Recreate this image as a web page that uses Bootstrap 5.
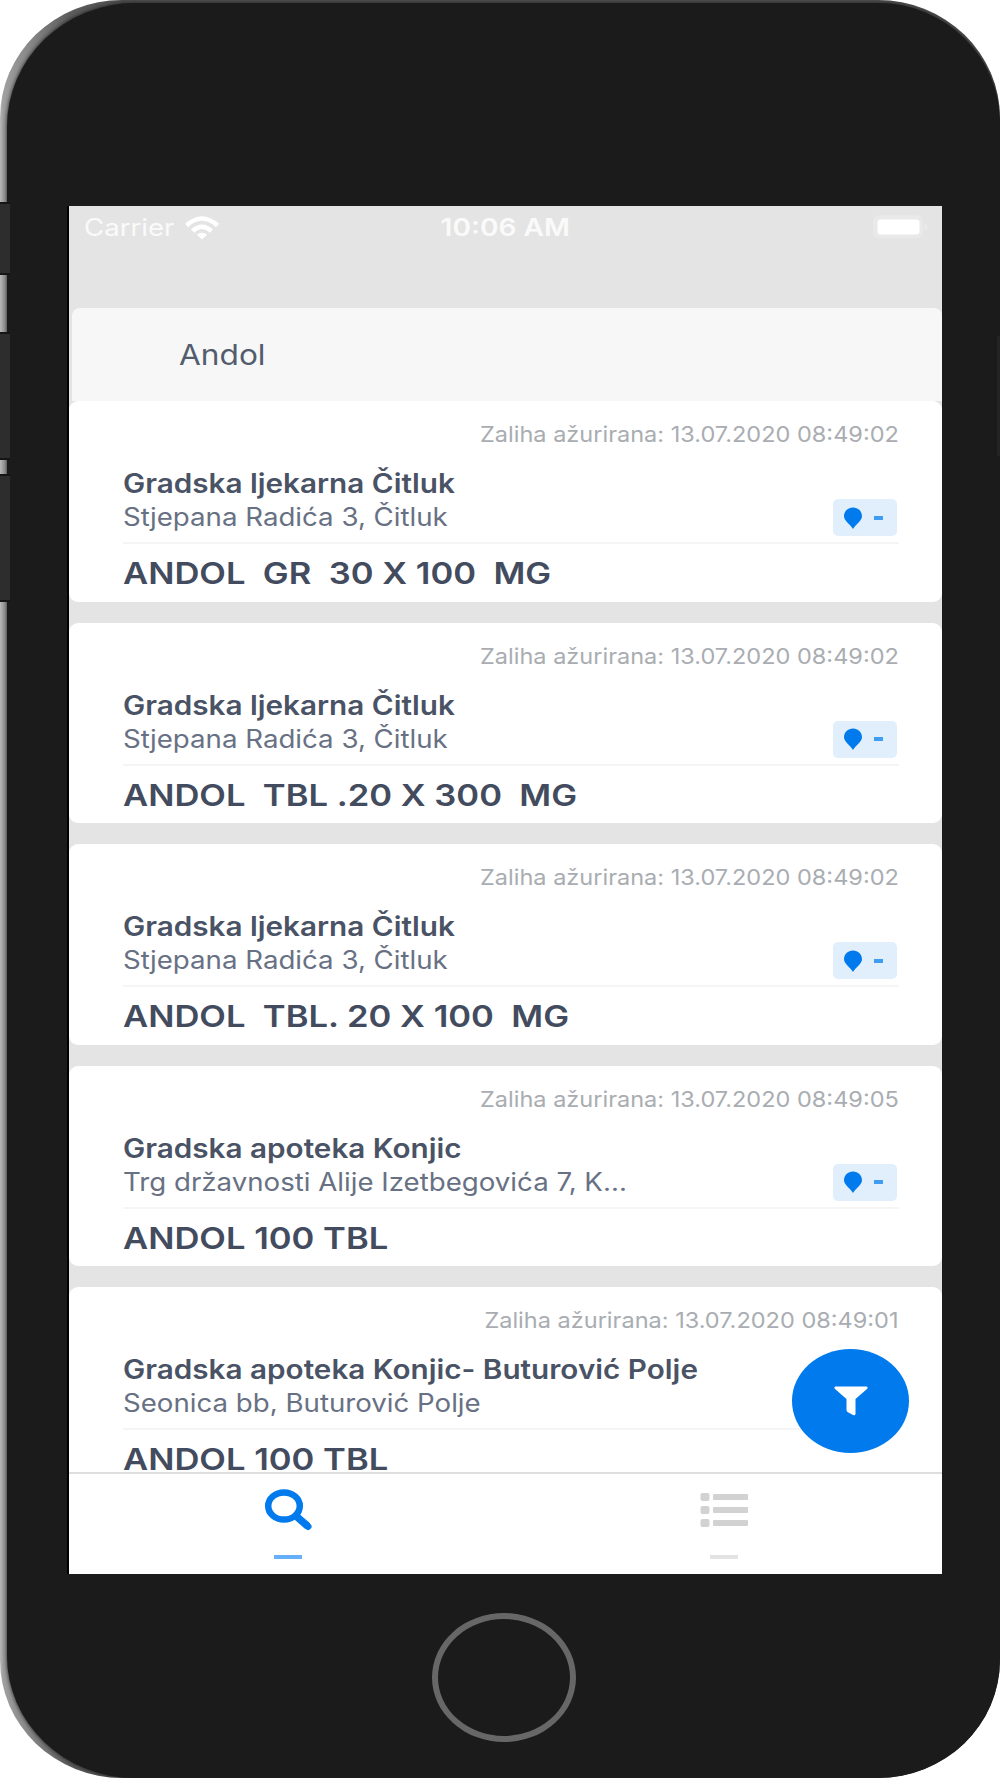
<!DOCTYPE html>
<html lang="bs">

<head>
    <meta charset="UTF-8">
    <meta name="viewport" content="width=device-width, initial-scale=1.0">
    <title>Andol</title>
    <link rel="stylesheet" href="https://cdn.jsdelivr.net/npm/bootstrap@5.3.2/dist/css/bootstrap.min.css">
    <style>
        body {
            background-color: #fff;
            font-family: Inter, "Liberation Sans", sans-serif;
            color: #434c5e;
        }

        /* Phone frame */
        .phone {
            width: 1000px;
            height: 1778px;
            padding: 3px 0 0 7px;
            border-radius: 122px / 118px;
            background: linear-gradient(to right, #b8b8b8, #a0a0a0 3px, #8c8c8c 25px, #5c5c5c 70px, #505050 120px);
        }

        .phone-body {
            height: 1775px;
            border-radius: 128px 122px 122px 128px / 124px 120px 118px 122px;
            background-color: #1b1b1b;
            box-shadow: 0 0 4px #1b1b1b;
            padding-top: 203px;
        }

        .phone-row {
            height: 1368px;
        }

        .rail-left {
            width: 62px;
            border-right: 2px solid #000;
        }

        .side-key {
            width: 10px;
            margin-left: -7px;
            background-color: #2d2d2d;
            border-top: 2px solid #151515;
            border-bottom: 2px solid #151515;
        }

        .key-mute {
            height: 73px;
            margin-top: -4px;
        }

        .key-up {
            height: 128px;
            margin-top: 57px;
        }

        .key-down {
            height: 128px;
            margin-top: 14px;
        }

        .rail-right {
            width: 58px;
        }

        .key-power {
            width: 3px;
            height: 120px;
            margin-top: 130px;
            background-color: #232323;
        }

        .home-key {
            width: 144px;
            height: 129px;
            margin: 39px 0 0 425px;
            border: 6px solid #676767;
            border-radius: 50%;
        }

        /* App screen */
        .screen {
            width: 873px;
            background-color: #e4e4e4;
        }

        .wide {
            display: inline-block;
            white-space: pre;
            transform: scaleX(1.13);
            transform-origin: left;
        }

        .status-bar {
            height: 102px;
            padding: 1px 15px 0;
            font-size: 24px;
            line-height: 42px;
            color: #fafafa;
        }

        .status-side {
            width: 240px;
            height: 42px;
        }

        .carrier {
            width: 101px;
        }

        .status-bar .wide {
            transform: scaleX(1.15);
        }

        .status-bar .clock {
            transform: scaleX(1.17);
            transform-origin: center;
        }

        .search-bar {
            height: 93px;
            margin-left: 3px;
            padding-left: 107px;
            border-radius: 8px 8px 0 0;
            background-color: #f7f7f7;
            font-size: 28px;
            line-height: 95px;
            color: #535c6d;
        }

        .results {
            height: 1071px;
        }

        .result {
            height: 200.5px;
            margin-bottom: 21px;
            padding: 18px 43px 0 54px;
            border-radius: 9px;
            background-color: #fff;
        }

        .result-date {
            font-size: 21.5px;
            line-height: 30px;
            color: #a9adb2;
        }

        .result-date .wide {
            transform: scaleX(1.094);
            transform-origin: right;
        }

        .result-name {
            margin-top: 17px;
            font-size: 26.5px;
            line-height: 34px;
            font-weight: 600;
            color: #4a5365;
        }

        .result-name .wide {
            transform: scaleX(1.12);
        }

        .result-address {
            height: 33px;
            font-size: 25px;
            line-height: 34px;
            color: #687184;
        }

        .result-address .wide {
            transform: scaleX(1.106);
        }

        .distance {
            width: 64px;
            height: 37px;
            margin-top: -1px;
            margin-right: 2px;
            padding-left: 11px;
            border-radius: 5px;
            background-color: #e1effc;
        }

        .distance-dash {
            width: 9px;
            height: 4px;
            background-color: #3f9cf3;
        }

        .result-product {
            margin-top: 9px;
            padding-top: 11px;
            border-top: 2px solid #f5f5f6;
            font-size: 30px;
            line-height: 37px;
            font-weight: 600;
            color: #434c5e;
        }

        .result-product .wide {
            transform: scaleX(1.152);
        }

        .filter-btn {
            right: 33px;
            bottom: 121px;
            width: 117px;
            height: 104px;
            border-radius: 50%;
            background-color: #007aed;
        }

        .tab-bar {
            height: 102px;
            border-top: 2px solid #dedede;
            background-color: #fff;
        }

        .tab-icon {
            margin-top: 15px;
        }

        .tab-line {
            width: 28px;
            height: 4px;
            margin-top: 24px;
            background-color: #e3e3e3;
        }

        .tab-current {
            padding-left: 1px;
        }

        .tab-current .tab-line {
            background-color: #66affa;
        }
    </style>
</head>

<body>

    <!-- Icons -->
    <svg class="d-none">
        <symbol id="pin" viewBox="0 0 18 22">
            <path fill="#007aed" d="M9 0.5C4 0.5 0 4.200 0 9.200C0 13.500 5.500 16.500 9 22C12.500 16.500 18 13.500 18 9.200C18 4.200 14 0.500 9 0.500Z" />
        </symbol>
    </svg>

    <div class="phone overflow-hidden">
        <div class="phone-body">
            <div class="phone-row d-flex">

                <div class="rail-left flex-shrink-0">
                    <div class="side-key key-mute"></div>
                    <div class="side-key key-up"></div>
                    <div class="side-key key-down"></div>
                </div>

                <main class="screen position-relative overflow-hidden flex-shrink-0">
                    <!-- Status bar -->
                    <div class="status-bar d-flex justify-content-between">
                        <div class="status-side d-flex align-items-center">
                            <div class="carrier"><span class="wide">Carrier</span></div>
                            <svg width="34" height="24" viewBox="0 0 34 24" fill="none" stroke="#fff" stroke-width="4.500">
                                <path d="M1.500 9.500Q17 -4.500 32.500 9.500" />
                                <path d="M7.500 15Q17 6.500 26.500 15" />
                                <path d="M17 23.500L11.800 18.800Q17 14.500 22.200 18.800Z" fill="#fff" stroke="none" />
                            </svg>
                        </div>
                        <div class="fw-semibold"><span class="wide clock">10:06 AM</span></div>
                        <div class="status-side d-flex align-items-center justify-content-end">
                            <svg width="56" height="26" viewBox="0 0 56 26">
                                <rect x="2" y="0.500" width="50" height="23" rx="6" fill="#e9e9e9" />
                                <rect x="6.500" y="4.500" width="42" height="15" rx="3" fill="#fff" />
                                <rect x="53.500" y="9" width="2.500" height="6" rx="1" fill="#ebebeb" />
                            </svg>
                        </div>
                    </div>

                    <div class="search-bar"><span class="wide">Andol</span></div>

                    <!-- Results -->
                    <div class="results overflow-hidden">
                        <div class="result">
                            <div class="result-date text-end"><span class="wide">Zaliha ažurirana: 13.07.2020 08:49:02</span></div>
                            <div class="result-name"><span class="wide">Gradska ljekarna Čitluk</span></div>
                            <div class="result-address d-flex justify-content-between">
                                <span class="wide">Stjepana Radića 3, Čitluk</span>
                                <div class="distance d-flex align-items-center gap-2">
                                    <svg width="18" height="22"><use href="#pin" /></svg>
                                    <div class="distance-dash ms-1"></div>
                                </div>
                            </div>
                            <div class="result-product"><span class="wide">ANDOL  GR  30 X 100  MG</span></div>
                        </div>

                        <div class="result">
                            <div class="result-date text-end"><span class="wide">Zaliha ažurirana: 13.07.2020 08:49:02</span></div>
                            <div class="result-name"><span class="wide">Gradska ljekarna Čitluk</span></div>
                            <div class="result-address d-flex justify-content-between">
                                <span class="wide">Stjepana Radića 3, Čitluk</span>
                                <div class="distance d-flex align-items-center gap-2">
                                    <svg width="18" height="22"><use href="#pin" /></svg>
                                    <div class="distance-dash ms-1"></div>
                                </div>
                            </div>
                            <div class="result-product"><span class="wide">ANDOL  TBL .20 X 300  MG</span></div>
                        </div>

                        <div class="result">
                            <div class="result-date text-end"><span class="wide">Zaliha ažurirana: 13.07.2020 08:49:02</span></div>
                            <div class="result-name"><span class="wide">Gradska ljekarna Čitluk</span></div>
                            <div class="result-address d-flex justify-content-between">
                                <span class="wide">Stjepana Radića 3, Čitluk</span>
                                <div class="distance d-flex align-items-center gap-2">
                                    <svg width="18" height="22"><use href="#pin" /></svg>
                                    <div class="distance-dash ms-1"></div>
                                </div>
                            </div>
                            <div class="result-product"><span class="wide">ANDOL  TBL. 20 X 100  MG</span></div>
                        </div>

                        <div class="result">
                            <div class="result-date text-end"><span class="wide">Zaliha ažurirana: 13.07.2020 08:49:05</span></div>
                            <div class="result-name"><span class="wide">Gradska apoteka Konjic</span></div>
                            <div class="result-address d-flex justify-content-between">
                                <span class="wide">Trg državnosti Alije Izetbegovića 7, K...</span>
                                <div class="distance d-flex align-items-center gap-2">
                                    <svg width="18" height="22"><use href="#pin" /></svg>
                                    <div class="distance-dash ms-1"></div>
                                </div>
                            </div>
                            <div class="result-product"><span class="wide">ANDOL 100 TBL</span></div>
                        </div>

                        <div class="result">
                            <div class="result-date text-end"><span class="wide">Zaliha ažurirana: 13.07.2020 08:49:01</span></div>
                            <div class="result-name"><span class="wide">Gradska apoteka Konjic- Buturović Polje</span></div>
                            <div class="result-address"><span class="wide">Seonica bb, Buturović Polje</span></div>
                            <div class="result-product"><span class="wide">ANDOL 100 TBL</span></div>
                        </div>
                    </div>

                    <!-- Filter button -->
                    <button class="filter-btn position-absolute border-0 p-0 d-flex align-items-center justify-content-center" aria-label="Filter">
                        <svg width="34" height="30" viewBox="0 0 34 30" fill="#fff">
                            <path d="M1.500 0.500H32.500Q34.500 1 33 3L21.500 13V28Q21 30 19 29L13.500 26Q12.500 25 12.500 24V13L1 3Q-0.500 1 1.500 0.500Z" />
                        </svg>
                    </button>

                    <!-- Tabs -->
                    <nav class="tab-bar d-flex">
                        <div class="tab-current w-50 d-flex flex-column align-items-center">
                            <svg class="tab-icon" width="48" height="42" viewBox="0 0 48 42" fill="none" stroke="#007aed">
                                <ellipse cx="20" cy="17" rx="15.800" ry="13.600" stroke-width="6.500" />
                                <path d="M31.500 26.500L43.500 37" stroke-width="7.500" />
                                <path d="M42 35.700L44 37.500" stroke-width="7" stroke-linecap="round" />
                            </svg>
                            <div class="tab-line"></div>
                        </div>
                        <div class="w-50 d-flex flex-column align-items-center">
                            <svg class="tab-icon" width="48" height="42" viewBox="0 0 48 42" fill="#d2d2d2">
                                <rect x="0.500" y="4" width="9" height="8" rx="2" />
                                <rect x="0.500" y="17" width="9" height="8" rx="2" />
                                <rect x="0.500" y="30" width="9" height="8" rx="2" />
                                <rect x="13" y="5" width="35" height="6" rx="1" />
                                <rect x="13" y="18" width="35" height="6" rx="1" />
                                <rect x="13" y="31" width="35" height="6" rx="1" />
                            </svg>
                            <div class="tab-line"></div>
                        </div>
                    </nav>
                </main>

                <div class="rail-right d-flex justify-content-end">
                    <div class="key-power"></div>
                </div>
            </div>

            <div class="home-key"></div>
        </div>
    </div>

    <script src="https://cdn.jsdelivr.net/npm/bootstrap@5.3.2/dist/js/bootstrap.bundle.min.js"></script>

</body>

</html>
